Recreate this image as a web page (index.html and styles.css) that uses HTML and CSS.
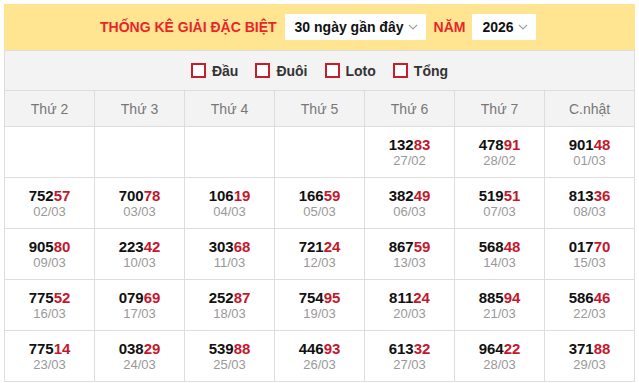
FILE: index.html
```html
<!DOCTYPE html>
<html lang="vi">
<head>
<meta charset="utf-8">
<link rel="stylesheet" href="styles.css">
</head>
<body>
<div class="box">
  <div class="top">
    <span class="title">THỐNG KÊ GIẢI ĐẶC BIỆT</span>
    <span class="select sel-days">30 ngày gần đây<svg class="chev" viewBox="0 0 10 6" width="10" height="6"><path d="M1 1l4 4 4-4" fill="none" stroke="#a0a0a0" stroke-width="1.1"/></svg></span>
    <span class="title">NĂM</span>
    <span class="select sel-year">2026<svg class="chev" viewBox="0 0 10 6" width="10" height="6"><path d="M1 1l4 4 4-4" fill="none" stroke="#a0a0a0" stroke-width="1.1"/></svg></span>
  </div>
  <div class="checks">
    <label class="chk"><span class="sq"></span>Đầu</label>
    <label class="chk"><span class="sq"></span>Đuôi</label>
    <label class="chk"><span class="sq"></span>Loto</label>
    <label class="chk"><span class="sq"></span>Tổng</label>
  </div>
  <table class="grid">
    <thead>
      <tr><th>Thứ 2</th><th>Thứ 3</th><th>Thứ 4</th><th>Thứ 5</th><th>Thứ 6</th><th>Thứ 7</th><th>C.nhật</th></tr>
    </thead>
    <tbody>
      <tr>
        <td></td><td></td><td></td><td></td>
        <td><b>132<i>83</i></b><span>27/02</span></td>
        <td><b>478<i>91</i></b><span>28/02</span></td>
        <td><b>901<i>48</i></b><span>01/03</span></td>
      </tr>
      <tr>
        <td><b>752<i>57</i></b><span>02/03</span></td>
        <td><b>700<i>78</i></b><span>03/03</span></td>
        <td><b>106<i>19</i></b><span>04/03</span></td>
        <td><b>166<i>59</i></b><span>05/03</span></td>
        <td><b>382<i>49</i></b><span>06/03</span></td>
        <td><b>519<i>51</i></b><span>07/03</span></td>
        <td><b>813<i>36</i></b><span>08/03</span></td>
      </tr>
      <tr>
        <td><b>905<i>80</i></b><span>09/03</span></td>
        <td><b>223<i>42</i></b><span>10/03</span></td>
        <td><b>303<i>68</i></b><span>11/03</span></td>
        <td><b>721<i>24</i></b><span>12/03</span></td>
        <td><b>867<i>59</i></b><span>13/03</span></td>
        <td><b>568<i>48</i></b><span>14/03</span></td>
        <td><b>017<i>70</i></b><span>15/03</span></td>
      </tr>
      <tr>
        <td><b>775<i>52</i></b><span>16/03</span></td>
        <td><b>079<i>69</i></b><span>17/03</span></td>
        <td><b>252<i>87</i></b><span>18/03</span></td>
        <td><b>754<i>95</i></b><span>19/03</span></td>
        <td><b>811<i>24</i></b><span>20/03</span></td>
        <td><b>885<i>94</i></b><span>21/03</span></td>
        <td><b>586<i>46</i></b><span>22/03</span></td>
      </tr>
      <tr>
        <td><b>775<i>14</i></b><span>23/03</span></td>
        <td><b>038<i>29</i></b><span>24/03</span></td>
        <td><b>539<i>88</i></b><span>25/03</span></td>
        <td><b>446<i>93</i></b><span>26/03</span></td>
        <td><b>613<i>32</i></b><span>27/03</span></td>
        <td><b>964<i>22</i></b><span>28/03</span></td>
        <td><b>371<i>88</i></b><span>29/03</span></td>
      </tr>
    </tbody>
  </table>
</div>
</body>
</html>
```
FILE: styles.css
```css
* { box-sizing: border-box; }
html, body { margin: 0; padding: 0; background: #fff; }
body {
  padding: 4px 4px 0 4px;
  font-family: "Liberation Sans", Arial, sans-serif;
}
.box { width: 631px; }
.top {
  height: 46px;
  background: #ffe592;
  display: flex;
  align-items: center;
  gap: 8px;
  padding-left: 96px;
}
.title {
  color: #e8262a;
  font-weight: bold;
  font-size: 14px;
}
.select {
  background: #fff;
  height: 26px;
  display: flex;
  align-items: center;
  font-weight: bold;
  font-size: 14px;
  color: #111;
  padding: 0 8px 0 10px;
}
.sel-days { width: 141px; }
.sel-year { width: 64px; margin-left: -1px; }
.chev { margin-left: auto; }
.checks {
  height: 40px;
  background: #f3f3f3;
  border: 1px solid #ddd;
  border-bottom: none;
  display: flex;
  align-items: center;
  justify-content: center;
  gap: 17px;
}
.chk {
  display: flex;
  align-items: center;
  gap: 6px;
  font-size: 14px;
  font-weight: bold;
  color: #333;
}
.sq {
  width: 15px;
  height: 15px;
  border: 2px solid #c3202e;
  background: #fff;
}
.grid {
  width: 631px;
  border-collapse: collapse;
  table-layout: fixed;
}
.grid th, .grid td {
  border: 1px solid #ddd;
  text-align: center;
}
.grid th {
  height: 36px;
  background: #f3f3f3;
  color: #777;
  font-weight: normal;
  font-size: 14px;
}
.grid td {
  height: 51px;
  padding: 0;
  vertical-align: middle;
}
.grid td b {
  display: block;
  font-size: 15px;
  font-weight: bold;
  color: #111;
  line-height: 17px;
}
.grid td i {
  font-style: normal;
  color: #c3182c;
}
.grid td span {
  display: block;
  font-size: 13px;
  color: #999;
  line-height: 15px;
}
```
